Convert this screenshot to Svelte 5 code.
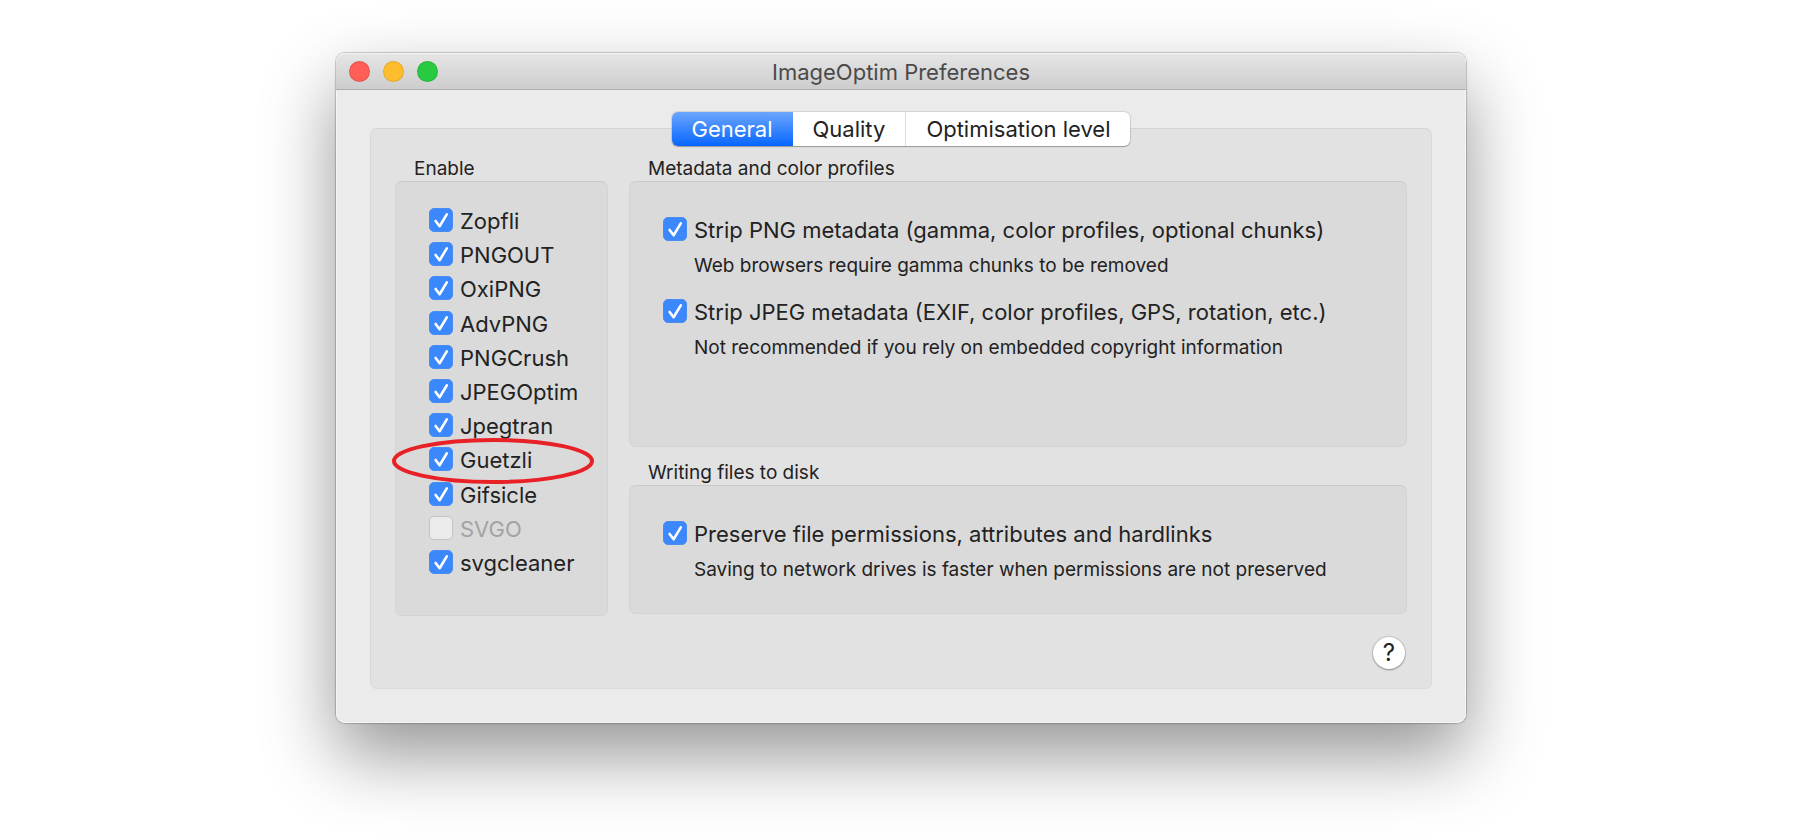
<script>
  let tools = $state([
    { name: 'Zopfli', on: true },
    { name: 'PNGOUT', on: true },
    { name: 'OxiPNG', on: true },
    { name: 'AdvPNG', on: true },
    { name: 'PNGCrush', on: true },
    { name: 'JPEGOptim', on: true },
    { name: 'Jpegtran', on: true },
    { name: 'Guetzli', on: true, circled: true },
    { name: 'Gifsicle', on: true },
    { name: 'SVGO', on: false, disabled: true },
    { name: 'svgcleaner', on: true },
  ]);

  let metadata = $state([
    {
      name: 'Strip PNG metadata (gamma, color profiles, optional chunks)',
      hint: 'Web browsers require gamma chunks to be removed',
      on: true,
    },
    {
      name: 'Strip JPEG metadata (EXIF, color profiles, GPS, rotation, etc.)',
      hint: 'Not recommended if you rely on embedded copyright information',
      on: true,
    },
  ]);

  let writing = $state([
    {
      name: 'Preserve file permissions, attributes and hardlinks',
      hint: 'Saving to network drives is faster when permissions are not preserved',
      on: true,
    },
  ]);

  const tabs = ['General', 'Quality', 'Optimisation level'];
  let active = $state('General');
</script>

{#snippet check(item)}
  <label class="check" class:disabled={item.disabled}>
    <span class="box">
      <input type="checkbox" bind:checked={item.on} disabled={item.disabled} />
      <svg viewBox="0 0 24 24" aria-hidden="true"><path d="M6.6 13 10.6 18.2 17.8 6.4" /></svg>
    </span>
    <span class="name">{item.name}</span>
    {#if item.circled}
      <svg class="ring" viewBox="0 0 202 46" aria-hidden="true">
        <ellipse cx="101" cy="23" rx="99" ry="21" />
      </svg>
    {/if}
  </label>
{/snippet}

<div class="page">
  <main class="window">
    <header class="titlebar">
      <div class="lights">
        <button class="red" aria-label="Close"></button>
        <button class="amber" aria-label="Minimise"></button>
        <button class="green" aria-label="Zoom"></button>
      </div>
      <h1>ImageOptim Preferences</h1>
    </header>

    <div class="content">
      <div class="tabs" role="tablist">
        {#each tabs as tab}
          <button role="tab" aria-selected={active === tab} onclick={() => (active = tab)}>{tab}</button>
        {/each}
      </div>

      <div class="panel">
        <div class="columns">
          <fieldset>
            <legend>Enable</legend>
            <div class="group tools">
              {#each tools as tool}
                {@render check(tool)}
              {/each}
            </div>
          </fieldset>

          <div class="side">
            <fieldset>
              <legend>Metadata and color profiles</legend>
              <div class="group options tall">
                {#each metadata as option}
                  <div>
                    {@render check(option)}
                    <p>{option.hint}</p>
                  </div>
                {/each}
              </div>
            </fieldset>

            <fieldset>
              <legend>Writing files to disk</legend>
              <div class="group options">
                {#each writing as option}
                  <div>
                    {@render check(option)}
                    <p>{option.hint}</p>
                  </div>
                {/each}
              </div>
            </fieldset>
          </div>
        </div>

        <footer>
          <button class="help" aria-label="Help">?</button>
        </footer>
      </div>
    </div>
  </main>
</div>

<style>
  :global(body) {
    margin: 0;
    background: #fff;
  }

  .page {
    box-sizing: border-box;
    padding: 53px 0 115px 2px;
    overflow: hidden;
    font-family: Inter, 'Liberation Sans', sans-serif;
    font-size: 22px;
    color: #222;
  }

  .window {
    max-width: 1130px;
    margin: 0 auto;
    border-radius: 9px;
    background: #ebebeb;
    box-shadow:
      inset 0 0 0 1px #f6f6f6,
      0 0 1px 1px rgba(0, 0, 0, 0.2),
      0 32px 72px rgba(0, 0, 0, 0.42);
  }

  .titlebar {
    display: grid;
    grid-template-columns: 1fr auto 1fr;
    align-items: center;
    box-sizing: border-box;
    height: 37px;
    padding: 0 13px;
    border-bottom: 1px solid #adadad;
    border-radius: 9px 9px 0 0;
    background: linear-gradient(#e6e6e6, #cdcdcd);
    box-shadow: inset 0 1px #f3f3f3;
  }

  .lights {
    display: flex;
    gap: 13px;
  }

  .lights button {
    width: 21px;
    height: 21px;
    padding: 0;
    border: 1px solid rgba(0, 0, 0, 0.1);
    border-radius: 50%;
  }

  .red { background: #ff5f57; }
  .amber { background: #ffbd2e; }
  .green { background: #28ca41; }

  h1 {
    margin: 0;
    padding-top: 2px;
    font-size: 22px;
    font-weight: 400;
    line-height: 34px;
    color: #4a4a4a;
  }

  .content {
    display: flex;
    flex-direction: column;
    padding: 22px 34px 34px;
  }

  .tabs {
    display: flex;
    align-self: center;
    z-index: 1;
    margin-bottom: -18px;
    border-radius: 6px;
    background: #fff;
    box-shadow: 0 0 1px 1px rgba(0, 0, 0, 0.1), 0 1px 1px rgba(0, 0, 0, 0.25);
  }

  .tabs button {
    padding: 0 20px;
    border: 0;
    background: none;
    font: inherit;
    line-height: 34px;
    color: #222;
  }

  .tabs button + button { border-left: 1px solid #dedede; }
  .tabs button:first-child { border-radius: 6px 0 0 6px; }
  .tabs button:last-child { border-radius: 0 6px 6px 0; }

  .tabs button[aria-selected='true'] {
    background: linear-gradient(#6ba5fd, #0766ff);
    color: #fff;
  }

  .tabs button[aria-selected='true'] + button { border-left: 0; }

  .panel {
    padding: 28px 24px 19px;
    border: 1px solid #dadada;
    border-top-color: #d4d4d4;
    border-radius: 7px;
    background: #e2e2e2;
  }

  .columns {
    display: grid;
    grid-template-columns: 213px 1fr;
    align-items: start;
    gap: 21px;
  }

  .side {
    display: grid;
    gap: 14px;
  }

  fieldset {
    min-width: 0;
    margin: 0;
    padding: 0;
    border: 0;
  }

  legend {
    padding: 0 19px;
    font-size: 19px;
    line-height: 24px;
  }

  .group {
    border: 1px solid #d3d3d3;
    border-top-color: #cacaca;
    border-radius: 7px;
    background: #dadada;
  }

  .tools {
    display: flex;
    flex-direction: column;
    justify-content: space-between;
    min-height: 376px;
    padding: 21px 33px 36px;
  }

  .options {
    display: grid;
    gap: 16px;
    padding: 30px 33px 31px;
  }

  .tall { padding-bottom: 86px; }

  .options p {
    margin: 8px 0 0 31px;
    font-size: 19px;
    line-height: 24px;
  }

  .check {
    display: flex;
    align-items: center;
    gap: 7px;
    position: relative;
    height: 34px;
    white-space: nowrap;
  }

  .name { padding-top: 2px; }
  .disabled { color: #a3a3a3; }

  .box {
    display: grid;
    flex: none;
    width: 24px;
    height: 24px;
  }

  .box > * {
    grid-area: 1 / 1;
    box-sizing: border-box;
    width: 24px;
    height: 24px;
    margin: 0;
  }

  .box input {
    appearance: none;
    border: 1px solid #c4c4c4;
    border-radius: 5px;
    background: #ebebeb;
  }

  .box input:checked {
    border-color: #4a8cf0;
    background: #3b88fd;
  }

  .box svg {
    visibility: hidden;
    pointer-events: none;
    fill: none;
    stroke: #fff;
    stroke-width: 2.6;
    stroke-linecap: round;
    stroke-linejoin: round;
  }

  .box input:checked + svg { visibility: visible; }

  /* hand-drawn style callout around one tool */
  .ring {
    position: absolute;
    top: -4px;
    left: -37px;
    width: 202px;
    height: 46px;
    pointer-events: none;
    fill: none;
    stroke: #e82127;
    stroke-width: 4;
  }

  footer {
    display: flex;
    justify-content: flex-end;
    margin-top: 21px;
    padding-right: 2px;
  }

  .help {
    width: 32px;
    height: 32px;
    padding: 0;
    border: 0;
    border-radius: 50%;
    background: #fff;
    box-shadow: 0 0 1px 1px rgba(0, 0, 0, 0.12), 0 1px 2px rgba(0, 0, 0, 0.3);
    font: inherit;
    font-size: 24px;
    line-height: 32px;
    color: #222;
  }
</style>
